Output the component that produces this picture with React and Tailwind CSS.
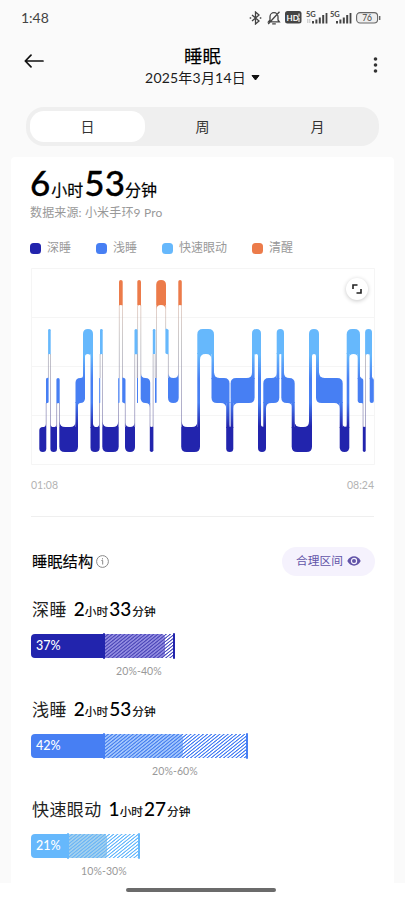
const stages = {
  awake: { top: 12, bottom: 37 },
  rem: { top: 61, bottom: 86 },
  light: { top: 110, bottom: 135 },
  deep: { top: 159, bottom: 184 },
};

// [stage, start x, end x]
const segments = [
  ['deep', 8.3, 15.3],
  ['light', 15, 17.6],
  ['rem', 17.1, 19.7],
  ['deep', 19.4, 26],
  ['light', 25.4, 28.7],
  ['deep', 28.3, 47],
  ['light', 44.5, 54],
  ['rem', 52, 62],
  ['deep', 59.5, 68.7],
  ['light', 68.2, 69.2],
  ['rem', 69, 71.7],
  ['deep', 71.3, 87.7],
  ['light', 87.2, 88.5],
  ['awake', 88, 91.7],
  ['light', 91.2, 94.5],
  ['deep', 94, 104],
  ['rem', 103.5, 106.5],
  ['light', 106, 107],
  ['awake', 106.3, 110],
  ['light', 109.7, 119.2],
  ['deep', 118.8, 122.4],
  ['rem', 121.8, 124.4],
  ['light', 124, 125.6],
  ['awake', 125.2, 135],
  ['rem', 134.4, 137.6],
  ['light', 137, 147.7],
  ['awake', 147.3, 150.8],
  ['deep', 150.2, 169],
  ['rem', 166.3, 183],
  ['light', 180.5, 198.5],
  ['deep', 195.2, 202.3],
  ['light', 199.6, 223.6],
  ['rem', 221, 230],
  ['deep', 227, 235],
  ['light', 232.3, 248.3],
  ['rem', 245.7, 253],
  ['light', 250.3, 263.7],
  ['deep', 260.7, 281],
  ['rem', 278, 288],
  ['light', 285, 311.7],
  ['deep', 308.7, 318.3],
  ['rem', 315.7, 329],
  ['light', 326.7, 332.3],
  ['deep', 331.8, 334.7],
  ['rem', 334.1, 341],
  ['light', 338.7, 342.8],
];

const legend = [
  { label: '深睡', width: 'w-[66px]', color: 'bg-[#2224ad]' },
  { label: '浅睡', width: 'w-[66px]', color: 'bg-[#477ff3]' },
  { label: '快速眼动', width: 'w-[90px]', color: 'bg-[#66b8fc]' },
  { label: '清醒', width: 'w-[66px]', color: 'bg-[#ec7b4a]' },
];

const structure = [
  {
    name: '深睡', hours: 2, minutes: 33, percent: 37, range: '20%-40%',
    solid: 73, filled: 60.5, total: 143, labelLeft: 'ml-[85px]',
    color: '#2224ad', tint: '#918be0', tintStripe: '#4f4aba', stripe: '#5052c0',
  },
  {
    name: '浅睡', hours: 2, minutes: 53, percent: 42, range: '20%-60%',
    solid: 73, filled: 78.5, total: 216, labelLeft: 'ml-[121px]',
    color: '#477ff3', tint: '#a3c6fd', tintStripe: '#4a82ee', stripe: '#477ff3',
  },
  {
    name: '快速眼动', hours: 1, minutes: 27, percent: 21, range: '10%-30%',
    solid: 37, filled: 38.5, total: 108, labelLeft: 'ml-[50px]',
    color: '#66b8fc', tint: '#a3d0ee', tintStripe: '#6cb6f5', stripe: '#66b8fc',
  },
];

function StatusBar() {
  return (
    <div className="flex h-[34px] items-center pl-[21px] pr-[24px] pt-px text-[#444]">
      <span className="text-[14px] leading-none">1:48</span>
      <div className="ml-auto flex items-center">
        <svg width="13" height="14" viewBox="0 0 13 14" fill="none" stroke="currentColor" strokeWidth="1.3">
          <path d="M3 4l7 6-3.5 3V1L10 4l-7 6" />
          <path d="M.7 7h1.5M10.8 7h1.5" strokeWidth="1.6" />
        </svg>
        <svg className="ml-[5px]" width="14" height="14" viewBox="0 0 14 14" fill="none" stroke="currentColor" strokeWidth="1.3">
          <path d="M1.5 10.8h10.8L11 9V5.7a4 4 0 0 0-8 0V9zM5.2 12.8h3.6M12.5.8L1.2 13" />
        </svg>
        <svg className="ml-[4px]" width="17" height="13" viewBox="0 0 17 13">
          <rect width="16.5" height="12.5" rx="2.5" fill="#444" />
          <text x="1.6" y="9.5" fontSize="8" fontWeight="700" fill="#fff" fontFamily="Lato">HD</text>
          <path d="M13.5 2.5h1v3h-1zM13 7.5h2v1h-2zM13 9.6h2v1h-2z" fill="#fff" />
        </svg>
        <Signal className="ml-[4px]" arrows />
        <Signal className="ml-[2px]" />
        <svg className="ml-[4px]" width="25" height="12" viewBox="0 0 25 12">
          <rect x=".6" y=".6" width="21" height="10.4" rx="3.5" fill="#eee" stroke="#666" strokeWidth="1.1" />
          <path d="M23.7 4v4" stroke="#666" strokeWidth="1.4" />
          <text x="6.2" y="9" fontSize="8.5" fill="#444" fontFamily="Lato">76</text>
        </svg>
      </div>
    </div>
  );
}

function Signal({ className, arrows }) {
  return (
    <svg className={className} width="22" height="14" viewBox="0 0 22 14" fill="#444">
      <text x="0" y="6" fontSize="7.5" fontWeight="700" fontFamily="Lato">5G</text>
      {arrows && <path d="M1.8 8v4M3.8 8v4" stroke="#aaa" strokeWidth=".7" />}
      <path d="M6 10h2v2.5H6zM9.4 8.5h2v4h-2zM12.8 6.5h2v6h-2zM16.2 4h2v8.5h-2zM19.6 2h1.8v10.5h-1.8z" />
    </svg>
  );
}

function Header() {
  return (
    <header className="flex h-[73px] items-start justify-between pl-[24px] pr-[20px]">
      <svg className="mt-[20px]" width="20" height="14" viewBox="0 0 20 14" fill="none" stroke="#111" strokeWidth="1.7" strokeLinecap="round" strokeLinejoin="round">
        <path d="M19 7H1.5M7 1.2L1.3 7 7 12.8" />
      </svg>
      <div className="-ml-[5px] flex flex-col items-center">
        <h1 className="mt-[11px] h-[22px] text-[18.5px] leading-[22px] text-black [-webkit-text-stroke:0.15px]">睡眠</h1>
        <div className="mt-[2px] flex items-center whitespace-nowrap text-[14px] leading-[18px] tracking-[0.2px] text-[#1c1c1c]">
          2025年3月14日
          <svg className="ml-[5px]" width="9" height="6" viewBox="0 0 9 6">
            <path d="M1 .5h7L4.5 5z" fill="#111" stroke="#111" strokeLinejoin="round" />
          </svg>
        </div>
      </div>
      <svg className="mt-[23px]" width="19" height="16" viewBox="0 0 19 16" fill="#333">
        <circle cx="9.5" cy="2" r="1.8" />
        <circle cx="9.5" cy="8" r="1.8" />
        <circle cx="9.5" cy="14" r="1.8" />
      </svg>
    </header>
  );
}

function Tabs() {
  return (
    <div className="mx-[26px] grid h-[39px] grid-cols-3 rounded-[18px] bg-[#efefef] p-[4px] text-center text-[14px] leading-[31px] text-[#333]">
      <div className="rounded-[14px] bg-white">日</div>
      <div>周</div>
      <div>月</div>
    </div>
  );
}

function corner(x, y, dx, dy, r) {
  return `M${x + dx * r} ${y}H${x}V${y + dy * r}Q${x} ${y} ${x + dx * r} ${y}Z`;
}

function buildChart() {
  const shapes = [];
  const links = [];
  segments.forEach(([stage, x0, x1], i) => {
    const { top, bottom } = stages[stage];
    const prev = segments[i - 1];
    const next = segments[i + 1];
    const r = Math.min(5.5, (x1 - x0) / 2);
    const prevUp = prev && stages[prev[0]].top < top;
    const prevDown = prev && stages[prev[0]].top > top;
    const nextUp = next && stages[next[0]].top < top;
    const nextDown = next && stages[next[0]].top > top;
    const tl = prevUp ? 0 : r;
    const bl = prevDown ? 0 : r;
    const tr = nextUp ? 0 : r;
    const br = nextDown ? 0 : r;
    shapes.push(
      `M${x0 + tl} ${top}H${x1 - tr}Q${x1} ${top} ${x1} ${top + tr}V${bottom - br}Q${x1} ${bottom} ${x1 - br} ${bottom}` +
        `H${x0 + bl}Q${x0} ${bottom} ${x0} ${bottom - bl}V${top + tl}Q${x0} ${top} ${x0 + tl} ${top}Z`
    );

    // inner fillets where the band turns into a connector
    const left = prev ? Math.max(x0, prev[2]) : x0;
    const right = next ? Math.min(x1, next[1]) : x1;
    const f = Math.max(0, Math.min(5.5, (right - left) / 2));
    if (f > 0.8) {
      if (prevUp) shapes.push(corner(left, top, 1, -1, f));
      if (prevDown) shapes.push(corner(left, bottom, 1, 1, f));
      if (nextUp) shapes.push(corner(right, top, -1, -1, f));
      if (nextDown) shapes.push(corner(right, bottom, -1, 1, f));
    }

    if (next) {
      const upper = nextUp ? stages[next[0]] : stages[stage];
      const lower = nextUp ? stages[stage] : stages[next[0]];
      const overlap = x1 - next[1];
      if (overlap > 1.2) {
        shapes.push(`M${next[1]} ${upper.bottom - 1}H${x1}V${lower.top + 1}H${next[1]}Z`);
        // the outer edge of each band also eases into the connector
        if (nextDown) {
          shapes.push(corner(x1, lower.top, 1, -1, Math.min(5.5, (next[2] - x1) / 2)));
        }
      } else {
        links.push({ x: next[1] + overlap / 2 - 0.4, y: upper.bottom, h: lower.top - upper.bottom });
      }
    }
  });
  return { shapes, links };
}

const chart = buildChart();

function SleepChart() {
  return (
    <div className="relative mt-[13px] h-[198px] w-[344px]">
      <svg width="344" height="198" viewBox="0 0 344 198">
        <defs>
          <linearGradient id="stages" gradientUnits="userSpaceOnUse" x1="0" y1="0" x2="0" y2="198">
            <stop offset=".21" stopColor="#ec7b4a" />
            <stop offset=".25" stopColor="#66b8fc" />
            <stop offset=".44" stopColor="#66b8fc" />
            <stop offset=".56" stopColor="#477ff3" />
            <stop offset=".68" stopColor="#477ff3" />
            <stop offset=".8" stopColor="#2224ad" />
          </linearGradient>
          <linearGradient id="links" gradientUnits="userSpaceOnUse" x1="0" y1="37" x2="0" y2="160">
            <stop offset="0" stopColor="#d9b9ac" />
            <stop offset=".3" stopColor="#aaa9ac" />
            <stop offset="1" stopColor="#7774ae" />
          </linearGradient>
        </defs>
        <g fill="none" stroke="#f5f5f5" strokeWidth="1">
          <path d="M.5 .5H343.5V196.5H.5Z" />
          <path d="M.5 49.5H343.5M.5 98.5H343.5M.5 147.5H343.5" />
        </g>
        {chart.links.map((l, i) => (
          <rect key={i} x={l.x} y={l.y} width=".8" height={l.h} fill="url(#links)" opacity=".8" />
        ))}
        {chart.shapes.map((d, i) => (
          <path key={i} d={d} fill="url(#stages)" />
        ))}
      </svg>
      <button className="absolute right-[7px] top-[10px] flex size-[22px] items-center justify-center rounded-full bg-white shadow-[0_1px_4px_rgba(0,0,0,0.22)]">
        <svg width="10" height="10" viewBox="0 0 10 10" fill="none" stroke="#222" strokeWidth="1.6">
          <path d="M1 5V1h4.5M9 5v4H4.5" />
        </svg>
      </button>
    </div>
  );
}

function hatch(color) {
  return `repeating-linear-gradient(141deg, ${color} 0 0.5px, transparent 1.1px 2px, ${color} 2.6px)`;
}

function StageRow({ item }) {
  return (
    <section className="h-[100px]">
      <div className="flex h-[24px] items-baseline whitespace-nowrap pl-px leading-[24px] text-black">
        <span className="mr-[7px] text-[17px] tracking-[0.4px] text-[#222]">{item.name}</span>
        <span className="text-[19px] font-medium">{item.hours}</span>
        <span className="text-[11.7px] [-webkit-text-stroke:0.15px]">小时</span>
        <span className="ml-px text-[19px] font-medium">{item.minutes}</span>
        <span className="ml-px text-[11.7px] [-webkit-text-stroke:0.15px]">分钟</span>
      </div>
      <div className="relative mt-[13px] flex h-[24px]" style={{ width: item.total }}>
        <div className="flex items-center rounded-l-[4px] pl-[5px] text-[12.5px] font-medium text-white" style={{ width: item.solid, background: item.color }}>
          {item.percent}%
        </div>
        <div className="flex-1" style={{ backgroundImage: hatch(item.stripe) }}>
          <div className="h-full rounded-r-[4px]" style={{ width: item.filled, backgroundColor: item.tint, backgroundImage: hatch(item.tintStripe) }} />
        </div>
        <i className="absolute -top-px h-[26px] w-[1.5px] rounded-full" style={{ left: item.solid - 1, background: item.color }} />
        <i className="absolute -right-px -top-px h-[26px] w-[2px] rounded-full" style={{ background: item.color }} />
      </div>
      <div className={`${item.labelLeft} mt-[7px] text-[10.5px] leading-[12px] tracking-[0.1px] text-[#999]`}>{item.range}</div>
    </section>
  );
}

export default function App() {
  return (
    <div className="flex h-[900px] w-[405px] flex-col overflow-hidden bg-[#fafafa] font-['Lato','Noto_Sans_CJK_SC',sans-serif]">
      <StatusBar />
      <Header />
      <Tabs />
      <main className="mx-[11px] mt-[11px] h-[726px] shrink-0 rounded-t-[4px] bg-white pl-[20px]">
        <div className="flex h-[48px] items-baseline text-black">
          <span className="-ml-px text-[35px] font-medium leading-[50px] [-webkit-text-stroke:0.3px]">6</span>
          <span className="ml-px text-[16px] [-webkit-text-stroke:0.2px]">小时</span>
          <span className="ml-px text-[35px] font-medium leading-[50px] [-webkit-text-stroke:0.3px]">53</span>
          <span className="text-[16px] [-webkit-text-stroke:0.2px]">分钟</span>
        </div>
        <div className="-ml-px h-[16px] whitespace-nowrap text-[12px] leading-[16px] tracking-[0.15px] text-[#999]">数据来源: 小米手环9 Pro</div>
        <div className="mt-[19px] flex h-[16px] items-center">
          {legend.map((l) => (
            <div key={l.label} className={`${l.width} flex shrink-0 items-center text-[12px] leading-[16px] text-[#999]`}>
              <span className={`${l.color} -ml-px mr-[6px] size-[11px] rounded-[3.5px]`} />
              {l.label}
            </div>
          ))}
        </div>
        <div className="-mt-px">
          <SleepChart />
        </div>
        <div className="mt-[12px] flex w-[343px] justify-between text-[10.5px] leading-[14px] text-[#b3b3b3]">
          <span>01:08</span>
          <span>08:24</span>
        </div>
        <hr className="mt-[24px] w-[343px] border-[#efefef]" />
        <div className="mt-[29px] flex h-[30px] w-[344px] items-center">
          <h2 className="ml-px text-[15.3px] leading-[20px] text-black [-webkit-text-stroke:0.15px]">睡眠结构</h2>
          <svg className="ml-[3px]" width="13" height="13" viewBox="0 0 13 13" fill="none" stroke="#888" strokeWidth="1">
            <circle cx="6.5" cy="6.5" r="5.9" />
            <path d="M5.4 5.5h1.3v4M6.5 3.2v1.2" />
          </svg>
          <div className="ml-auto flex h-[29px] w-[93px] items-center justify-center rounded-full bg-[#f5f2fd] text-[11.7px] text-[#6254a8]">
            合理区间
            <svg className="ml-[4px]" width="14" height="10" viewBox="0 0 14 10">
              <path d="M.3 5C3.3-1.2 10.7-1.2 13.7 5 10.7 11.2 3.3 11.2.3 5Z" fill="#6254a8" />
              <circle cx="7" cy="5" r="2.6" fill="#6254a8" stroke="#f5f2fd" strokeWidth="1.2" />
            </svg>
          </div>
        </div>
        <div className="mt-[21px]">
          {structure.map((item) => (
            <StageRow key={item.name} item={item} />
          ))}
        </div>
      </main>
      <footer className="flex flex-1 justify-center bg-white pr-[3px] pt-[5px]">
        <div className="h-[4px] w-[150px] rounded-full bg-[#6b6b6b]" />
      </footer>
    </div>
  );
}
